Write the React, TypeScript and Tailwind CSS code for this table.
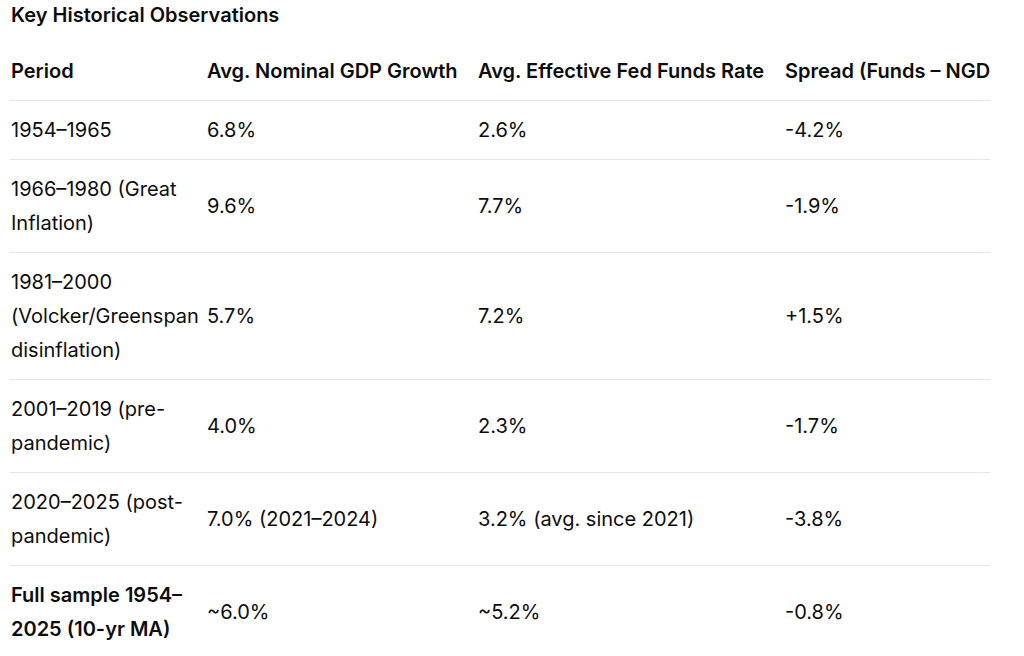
const rows = [
  { period: '1954–1965', gdp: '6.8%', funds: '2.6%', spread: '-4.2%' },
  { period: '1966–1980 (Great Inflation)', gdp: '9.6%', funds: '7.7%', spread: '-1.9%' },
  { period: '1981–2000 (Volcker/Greenspan disinflation)', gdp: '5.7%', funds: '7.2%', spread: '+1.5%' },
  { period: '2001–2019 (pre-pandemic)', gdp: '4.0%', funds: '2.3%', spread: '-1.7%' },
  { period: '2020–2025 (post-pandemic)', gdp: '7.0% (2021–2024)', funds: '3.2% (avg. since 2021)', spread: '-3.8%' },
  { period: 'Full sample 1954–2025 (10-yr MA)', gdp: '~6.0%', funds: '~5.2%', spread: '-0.8%', bold: true },
]

export default function App() {
  return (
    <div className="min-h-screen bg-white text-[#0d0d0d] font-['Inter','Liberation_Sans',sans-serif] pl-[10px] pt-[1px]">
      <h3 className="text-[20px] leading-[28px] font-semibold pl-[1px]">Key Historical Observations</h3>

      <div className="mt-[13px] w-[980px] overflow-hidden">
        <table className="table-fixed border-collapse text-[20px] leading-[34px] w-[1100px]">
          <colgroup>
            <col className="w-[197px]" />
            <col className="w-[271px]" />
            <col className="w-[307px]" />
            <col className="w-[325px]" />
          </colgroup>
          <thead>
            <tr className="border-b border-[#e1e5ea]">
              <th className="text-left font-semibold py-3 pl-[1px] pr-[5px] whitespace-nowrap">Period</th>
              <th className="text-left font-semibold py-3 pr-2 whitespace-nowrap">Avg. Nominal GDP Growth</th>
              <th className="text-left font-semibold py-3 pr-2 whitespace-nowrap">Avg. Effective Fed Funds Rate</th>
              <th className="text-left font-semibold py-3 pr-2 whitespace-nowrap">Spread (Funds – NGDP)</th>
            </tr>
          </thead>
          <tbody>
            {rows.map((r, i) => (
              <tr key={i} className={i < rows.length - 1 ? 'border-b border-[#e1e5ea]' : ''}>
                <td className={`align-middle py-3 pl-[1px] pr-[5px] ${r.bold ? 'font-semibold' : ''}`}>{r.period}</td>
                <td className="align-middle py-3 pr-2">{r.gdp}</td>
                <td className="align-middle py-3 pr-2">{r.funds}</td>
                <td className="align-middle py-3 pr-2">{r.spread}</td>
              </tr>
            ))}
          </tbody>
        </table>
      </div>
    </div>
  )
}
